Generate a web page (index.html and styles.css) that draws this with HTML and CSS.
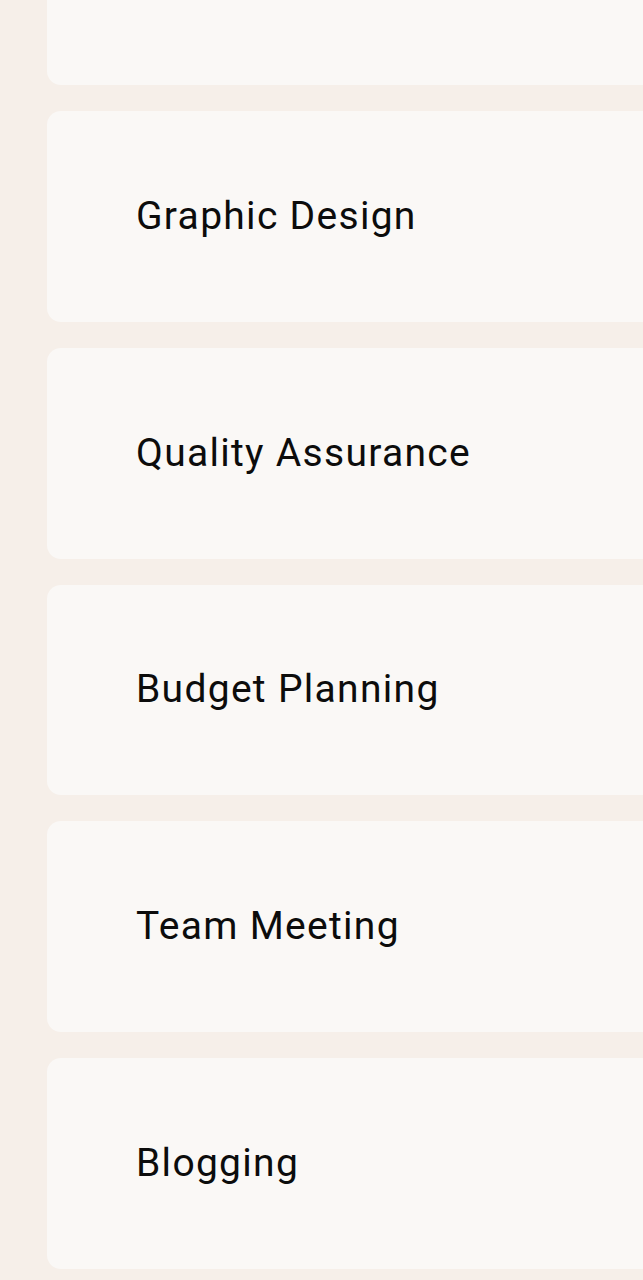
FILE: index.html
```html
<!DOCTYPE html>
<html lang="en">
<head>
<meta charset="utf-8">
<title>Tasks</title>
<link rel="stylesheet" href="styles.css">
</head>
<body>
<main class="list">
  <div class="card"><span class="label">Digital Marketing</span></div>
  <div class="card"><span class="label">Graphic Design</span></div>
  <div class="card"><span class="label">Quality Assurance</span></div>
  <div class="card"><span class="label">Budget Planning</span></div>
  <div class="card"><span class="label">Team Meeting</span></div>
  <div class="card"><span class="label">Blogging</span></div>
</main>
</body>
</html>
```
FILE: styles.css
```css
html, body {
  margin: 0;
  padding: 0;
  background: #f6efe9;
  overflow: hidden;
  height: 1280px;
}
.list {
  display: flex;
  flex-direction: column;
  gap: 26px;
  margin-top: -125.75px;
  padding-left: 47px;
  margin-right: -60px;
}
.card {
  height: 210.75px;
  background: #faf8f6;
  border-radius: 14px;
  display: flex;
  align-items: center;
  padding-left: 89px;
  box-sizing: border-box;
}
.label {
  font-family: Roboto, "Noto Sans", sans-serif;
  font-size: 39px;
  letter-spacing: 1.3px;
  color: #0c0c0c;
  line-height: 1;
}
```
